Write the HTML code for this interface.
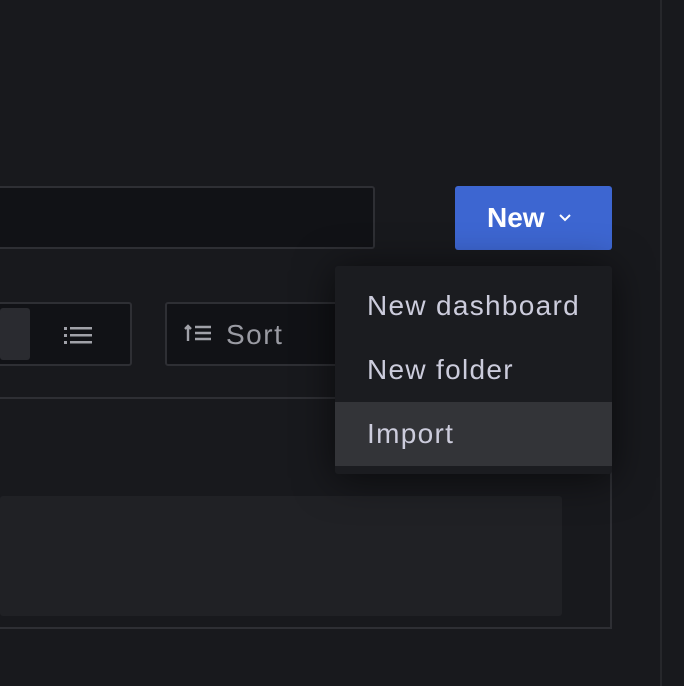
<!DOCTYPE html>
<html><head><style>
body{margin:0;width:684px;height:686px;background:#18191d;position:relative;overflow:hidden;font-family:"Liberation Sans",sans-serif}
div{position:absolute;box-sizing:border-box}
</style></head><body>
<div style="left:660px;top:0;width:2px;height:686px;background:#26272b"></div>
<div style="left:-4px;top:186px;width:379px;height:63px;background:#111216;border:2px solid #2e2f34;border-radius:3px"></div>
<div style="left:455px;top:186px;width:157px;height:64px;background:#3d66d1;border-radius:3px;color:#fff;font-size:28px;font-weight:bold;line-height:64px;padding-left:32px">New<svg width="14" height="10" style="position:absolute;left:103px;top:27px"><path d="M2 2l5 5 5-5" stroke="#fff" stroke-width="2" fill="none"/></svg></div>
<div style="left:-4px;top:302px;width:136px;height:64px;border:2px solid #2e2f34;border-radius:3px;background:#111216"></div>
<div style="left:0;top:308px;width:30px;height:52px;background:#2a2b30;border-radius:3px"></div>
<svg style="position:absolute;left:64px;top:326px" width="28" height="20"><g fill="#a0a1a8"><rect x="0" y="1" width="3" height="3"/><rect x="6" y="1" width="22" height="2.5"/><rect x="0" y="8" width="3" height="3"/><rect x="6" y="8" width="22" height="2.5"/><rect x="0" y="15" width="3" height="3"/><rect x="6" y="15" width="22" height="2.5"/></g></svg>
<div style="left:165px;top:302px;width:200px;height:64px;border:2px solid #2e2f34;border-radius:3px;background:#111216"></div>
<svg style="position:absolute;left:184px;top:323px" width="28" height="20"><g stroke="#a0a1a8" stroke-width="2.4" fill="none"><path d="M4 18V3M1 6l3-3 3 3"/><path d="M11 4h16M11 10h16M11 16h16"/></g></svg>
<div style="left:226px;top:319px;color:#9a9ba3;font-size:28px;letter-spacing:1.5px">Sort</div>
<div style="left:-4px;top:397px;width:616px;height:232px;border:2px solid #2e2f34"></div>
<div style="left:0;top:496px;width:562px;height:120px;background:#202125;border-radius:3px"></div>
<div style="left:335px;top:266px;width:277px;height:208px;background:#1b1c20;box-shadow:0 4px 40px rgba(0,0,0,.6);border-radius:3px;overflow:hidden">
<div style="left:0;top:136px;width:277px;height:64px;background:#333438"></div>
<div style="left:32px;top:24px;color:#ccccdc;font-size:28px;letter-spacing:1.3px;white-space:nowrap">New dashboard</div>
<div style="left:32px;top:88px;color:#ccccdc;font-size:28px;letter-spacing:1.3px;white-space:nowrap">New folder</div>
<div style="left:32px;top:152px;color:#ccccdc;font-size:28px;letter-spacing:1.3px">Import</div>
</div>
</body></html>
